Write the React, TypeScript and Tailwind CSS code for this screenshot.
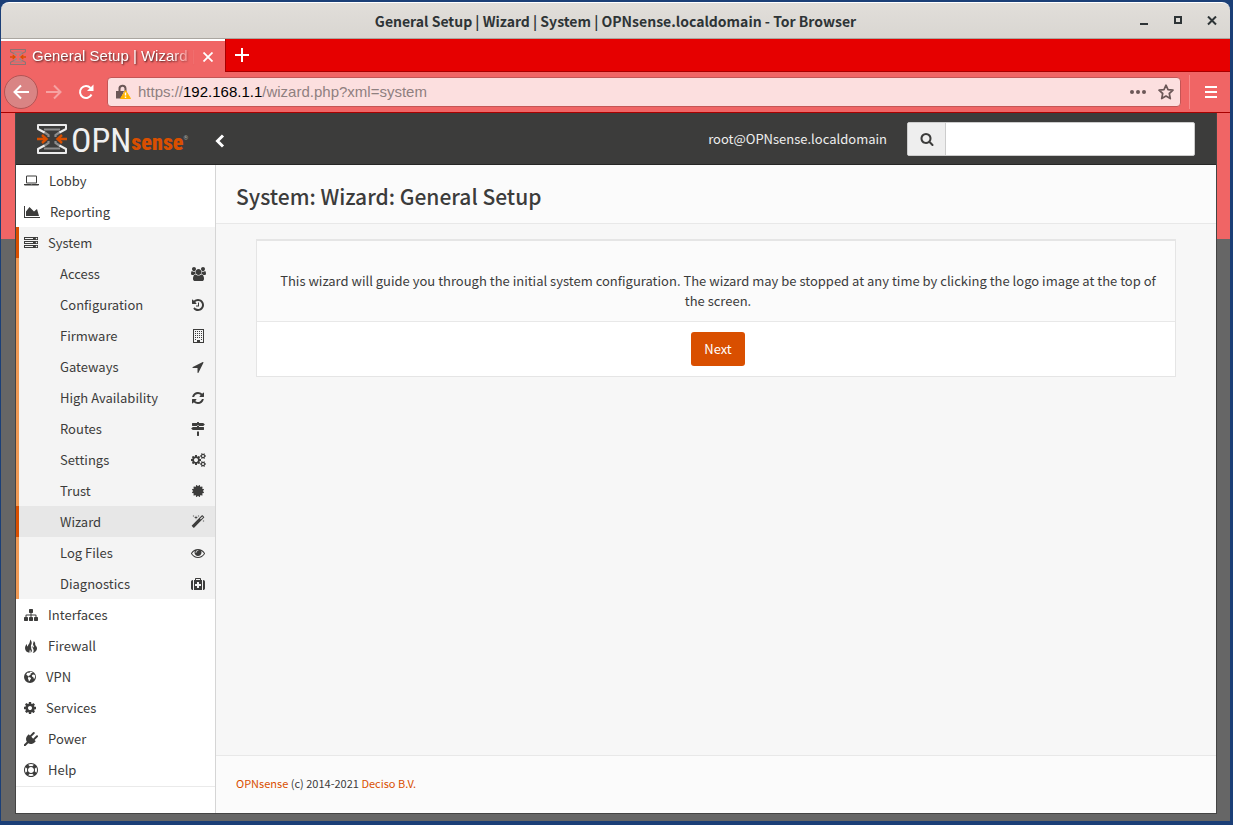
import React from "react";

type IconDef = { w: number; d: string };

const icons: Record<string, IconDef> = {
  laptop: { w: 1920, d: "M416 1216q-66 0-113-47t-47-113v-704q0-66 47-113t113-47h1088q66 0 113 47t47 113v704q0 66-47 113t-113 47h-1088zm-32-864v704q0 13 9.5 22.5t22.5 9.5h1088q13 0 22.5-9.5t9.5-22.5v-704q0-13-9.5-22.5t-22.5-9.5h-1088q-13 0-22.5 9.5t-9.5 22.5zm1376 928h160v96q0 40-47 68t-113 28h-1600q-66 0-113-28t-47-68v-96h1760zm-720 96q16 0 16-16t-16-16h-160q-16 0-16 16t16 16h160z" },
  chart: { w: 2048, d: "M2048 1536v128h-2048v-1536h128v1408h1920zm-384-1024l256 896h-1664v-576l448-576 576 576z" },
  server: { w: 1792, d: "M128 1408h1024v-128h-1024v128zm0-512h1024v-128h-1024v128zm1568 448q0-40-28-68t-68-28-68 28-28 68 28 68 68 28 68-28 28-68zm-1568-960h1024v-128h-1024v128zm1568 448q0-40-28-68t-68-28-68 28-28 68 28 68 68 28 68-28 28-68zm0-512q0-40-28-68t-68-28-68 28-28 68 28 68 68 28 68-28 28-68zm96 832v384h-1792v-384h1792zm0-512v384h-1792v-384h1792zm0-512v384h-1792v-384h1792z" },
  users: { w: 1920, d: "M593 896q-162 5-265 128h-134q-82 0-138-40.5t-56-118.5q0-353 124-353 6 0 43.5 21t97.5 42.5 119 21.5q67 0 133-23-5 37-5 66 0 139 81 256zm1071 637q0 120-73 189.5t-194 69.5h-874q-121 0-194-69.5t-73-189.5q0-53 3.5-103.5t14-109 26.5-108.5 43-97.5 62-81 85.5-53.5 111.5-20q10 0 43 21.5t73 48 107 48 135 21.5 135-21.5 107-48 73-48 43-21.5q61 0 111.5 20t85.5 53.5 62 81 43 97.5 26.5 108.5 14 109 3.5 103.5zm-1024-1277q0 106-75 181t-181 75-181-75-75-181 75-181 181-75 181 75 75 181zm704 384q0 159-112.5 271.5t-271.5 112.5-271.5-112.5-112.5-271.5 112.5-271.5 271.5-112.5 271.5 112.5 112.5 271.5zm576 225q0 78-56 118.5t-138 40.5h-134q-103-123-265-128 81-117 81-256 0-29-5-66 66 23 133 23 59 0 119-21.5t97.5-42.5 43.5-21q124 0 124 353zm-128-609q0 106-75 181t-181 75-181-75-75-181 75-181 181-75 181 75 75 181z" },
  history: { w: 1792, d: "M1664 896q0 156-61 298t-164 245-245 164-298 61q-172 0-327-72.5t-264-204.5q-7-10-6.5-22.5t8.5-20.5l137-138q10-9 25-9 16 2 23 12 73 95 179 147t225 52q104 0 198.5-40.5t163.5-109.5 109.5-163.5 40.5-198.5-40.5-198.5-109.5-163.5-163.5-109.5-198.5-40.5q-98 0-188 35.5t-160 101.5l137 138q31 30 14 69-17 40-59 40h-448q-26 0-45-19t-19-45v-448q0-42 40-59 39-17 69 14l130 129q107-101 244.5-156.5t284.5-55.5q156 0 298 61t245 164 164 245 61 298zm-640-288v448q0 14-9 23t-23 9h-320q-14 0-23-9t-9-23v-64q0-14 9-23t23-9h224v-352q0-14 9-23t23-9h64q14 0 23 9t9 23z" },
  building: { w: 1408, d: "M0 0h1408v1792h-1408zM128 128v1536h384v-256h384v256h384v-1536zM256 256h128v128h-128zM512 256h128v128h-128zM768 256h128v128h-128zM1024 256h128v128h-128zM256 512h128v128h-128zM512 512h128v128h-128zM768 512h128v128h-128zM1024 512h128v128h-128zM256 768h128v128h-128zM512 768h128v128h-128zM768 768h128v128h-128zM1024 768h128v128h-128zM256 1024h128v128h-128zM512 1024h128v128h-128zM768 1024h128v128h-128zM1024 1024h128v128h-128zM256 1280h128v128h-128zM1024 1280h128v128h-128z" },
  arrow: { w: 1792, d: "M1593 349l-640 1280q-17 35-57 35-5 0-15-2-22-5-35.5-22.5t-13.5-39.5v-576h-576q-22 0-39.5-13.5t-22.5-35.5 4-42 29-30l1280-640q13-7 29-7 27 0 45 19 15 14 18.5 34.5t-6.5 39.5z" },
  refresh: { w: 1792, d: "M1639 1056q0 5-1 7-64 268-268 434.5t-478 166.5q-146 0-282.5-55t-243.5-157l-129 129q-19 19-45 19t-45-19-19-45v-448q0-26 19-45t45-19h448q26 0 45 19t19 45-19 45l-137 137q71 66 161 102t187 36q134 0 250-65t186-179q11-17 53-117 8-23 30-23h192q13 0 22.5 9.5t9.5 22.5zm25-800v448q0 26-19 45t-45 19h-448q-26 0-45-19t-19-45 19-45l138-138q-148-137-349-137-134 0-250 65t-186 179q-11 17-53 117-8 23-30 23h-199q-13 0-22.5-9.5t-9.5-22.5v-7q65-268 270-434.5t480-166.5q146 0 284 55.5t245 156.5l130-129q19-19 45-19t45 19 19 45z" },
  signs: { w: 1792, d: "M1745 297q10 10 10 23t-10 23l-141 141q-28 28-68 28h-1344q-26 0-45-19t-19-45v-256q0-26 19-45t45-19h576v-64q0-26 19-45t45-19h128q26 0 45 19t19 45v64h512q40 0 68 28zm-977 919h256v512q0 26-19 45t-45 19h-128q-26 0-45-19t-19-45v-512zm832-576q26 0 45 19t19 45v256q0 26-19 45t-45 19h-1344q-40 0-68-28l-141-141q-10-10-10-23t10-23l141-141q28-28 68-28h512v-192h256v192h576z" },
  cogs: { w: 1920, d: "M896 896q0-106-75-181t-181-75-181 75-75 181 75 181 181 75 181-75 75-181zm768 512q0-52-38-90t-90-38-90 38-38 90q0 53 37.5 90.5t90.5 37.5 90.5-37.5 37.5-90.5zm0-1024q0-52-38-90t-90-38-90 38-38 90q0 53 37.5 90.5t90.5 37.5 90.5-37.5 37.5-90.5zm-384 421v185q0 10-7 19.5t-16 10.5l-155 24q-11 35-32 76 34 48 90 115 7 11 7 20 0 12-7 19-23 30-82.5 89.5t-78.5 59.5q-11 0-21-7l-115-90q-37 19-77 31-11 108-23 155-7 24-30 24h-186q-11 0-20-7.5t-10-17.5l-23-153q-34-10-75-31l-118 89q-7 7-20 7-11 0-21-8-144-133-144-160 0-9 7-19 10-14 41-53t47-61q-23-44-35-82l-152-24q-10-1-17-9.5t-7-19.5v-185q0-10 7-19.5t16-10.5l155-24q11-35 32-76-34-48-90-115-7-11-7-20 0-12 7-20 22-30 82-89t79-59q11 0 21 7l115 90q34-18 77-32 11-108 23-154 7-24 30-24h186q11 0 20 7.5t10 17.5l23 153q34 10 75 31l118-89q8-7 20-7 11 0 21 8 144 133 144 160 0 8-7 19-12 16-42 54t-45 60q23 48 34 82l152 23q10 2 17 10.5t7 19.5zm640 533v140q0 16-149 31-12 27-30 52 51 113 51 138 0 4-4 7-122 71-124 71-8 0-46-47t-52-68q-20 2-30 2t-30-2q-14 21-52 68t-46 47q-2 0-124-71-4-3-4-7 0-25 51-138-18-25-30-52-149-15-149-31v-140q0-16 149-31 13-29 30-52-51-113-51-138 0-4 4-7 4-2 35-20t59-34 30-16q8 0 46 46.5t52 67.5q20-2 30-2t30 2q51-71 92-112l6-2q4 0 124 70 4 3 4 7 0 25-51 138 17 23 30 52 149 15 149 31zm0-1024v140q0 16-149 31-12 27-30 52 51 113 51 138 0 4-4 7-122 71-124 71-8 0-46-47t-52-68q-20 2-30 2t-30-2q-14 21-52 68t-46 47q-2 0-124-71-4-3-4-7 0-25 51-138-18-25-30-52-149-15-149-31v-140q0-16 149-31 13-29 30-52-51-113-51-138 0-4 4-7 4-2 35-20t59-34 30-16q8 0 46 46.5t52 67.5q20-2 30-2t30 2q51-71 92-112l6-2q4 0 124 70 4 3 4 7 0 25-51 138 17 23 30 52 149 15 149 31z" },
  certificate: { w: 1536, d: "M1376 896l138 135q30 28 20 70-12 41-52 51l-188 48 53 186q12 41-19 70-29 31-70 19l-186-53-48 188q-10 40-51 52-12 2-19 2-31 0-51-22l-135-138-135 138q-28 30-70 20-41-11-51-52l-48-188-186 53q-41 12-70-19-31-29-19-70l53-186-188-48q-40-10-52-51-10-42 20-70l138-135-138-135q-30-28-20-70 12-41 52-51l188-48-53-186q-12-41 19-70 29-31 70-19l186 53 48-188q10-41 51-51 41-12 70 19l135 139 135-139q29-30 70-19 41 10 51 51l48 188 186-53q41-12 70 19 31 29 19 70l-53 186 188 48q40 10 52 51 10 42-20 70z" },
  magic: { w: 1792, d: "M1254 581l293-293-107-107-293 293zm447-293q0 27-18 45l-1286 1286q-18 18-45 18t-45-18l-198-198q-18-18-18-45t18-45l1286-1286q18-18 45-18t45 18l198 198q18 18 18 45zm-1351-190l98 30-98 30-30 98-30-98-98-30 98-30 30-98zm350 162l196 60-196 60-60 196-60-196-196-60 196-60 60-196zm930 478l98 30-98 30-30 98-30-98-98-30 98-30 30-98zm-640-640l98 30-98 30-30 98-30-98-98-30 98-30 30-98z" },
  eye: { w: 1792, d: "M1664 960q-152-236-381-353 61 104 61 225 0 185-131.5 316.5t-316.5 131.5-316.5-131.5-131.5-316.5q0-121 61-225-229 117-381 353 133 205 333.5 326.5t434.5 121.5 434.5-121.5 333.5-326.5zm-720-384q0-20-14-34t-34-14q-125 0-214.5 89.5t-89.5 214.5q0 20 14 34t34 14 34-14 14-34q0-86 61-147t147-61q20 0 34-14t14-34zm848 384q0 34-20 69-140 230-376.5 368.5t-499.5 138.5-499.5-139-376.5-368q-20-35-20-69t20-69q140-229 376.5-368t499.5-139 499.5 139 376.5 368q20 35 20 69z" },
  medkit: { w: 1792, d: "M1280 1120v-192q0-14-9-23t-23-9h-224v-224q0-14-9-23t-23-9h-192q-14 0-23 9t-9 23v224h-224q-14 0-23 9t-9 23v192q0 14 9 23t23 9h224v224q0 14 9 23t23 9h192q14 0 23-9t9-23v-224h224q14 0 23-9t9-23zm-640-736h512v-128h-512v128zm-384 0v1280h-32q-92 0-158-66t-66-158v-832q0-92 66-158t158-66h32zm1152 0v1280h-1024v-1280h128v-160q0-40 28-68t68-28h576q40 0 68 28t28 68v160h128zm384 224v832q0 92-66 158t-158 66h-32v-1280h32q92 0 158 66t66 158z" },
  sitemap: { w: 1792, d: "M1792 1248v320q0 40-28 68t-68 28h-320q-40 0-68-28t-28-68v-320q0-40 28-68t68-28h96v-192h-512v192h96q40 0 68 28t28 68v320q0 40-28 68t-68 28h-320q-40 0-68-28t-28-68v-320q0-40 28-68t68-28h96v-192h-512v192h96q40 0 68 28t28 68v320q0 40-28 68t-68 28h-320q-40 0-68-28t-28-68v-320q0-40 28-68t68-28h96v-192q0-52 38-90t90-38h512v-192h-96q-40 0-68-28t-28-68v-320q0-40 28-68t68-28h320q40 0 68 28t28 68v320q0 40-28 68t-68 28h-96v192h512q52 0 90 38t38 90v192h96q40 0 68 28t28 68z" },
  fire: { w: 1792, d: "M800 60C1020 340 1030 560 930 740C870 850 870 940 930 1000C880 1180 960 1330 1010 1440C1020 1580 960 1700 840 1770C880 1560 850 1450 760 1330C720 1470 690 1600 700 1770C400 1730 140 1500 130 1180C120 940 240 780 380 640C370 820 390 930 450 960C520 740 680 600 720 440C750 320 790 220 800 60zM1250 260C1460 440 1430 620 1440 720C1470 850 1660 920 1670 1180C1670 1500 1430 1720 1110 1790C1230 1640 1270 1480 1210 1330C1150 1180 1040 1080 1100 860C1130 980 1170 1060 1260 1100C1320 940 1200 860 1160 720C1120 560 1240 450 1250 260z" },
  globe: { w: 1536, d: "M768 128a768 768 0 1 0 0 1536a768 768 0 1 0 0-1536zM700 250C850 210 1010 240 1120 310L1010 400L900 370L830 450L920 520L800 600L720 700L600 740L640 830L520 800L440 700L330 640L290 560L400 380L520 320L640 380L760 330zM1080 620L1230 560L1390 640L1420 900L1340 1120L1230 1080L1200 920L1060 850L1000 730zM560 910L740 930L900 1030L880 1160L780 1250L720 1400L620 1450L590 1250L500 1120z" },
  cog: { w: 1536, d: "M1024 896q0-106-75-181t-181-75-181 75-75 181 75 181 181 75 181-75 75-181zm512-109v222q0 12-8 23t-20 13l-185 28q-19 54-39 91 35 50 107 138 10 12 10 25t-9 23q-27 37-99 108t-94 71q-12 0-26-9l-138-108q-44 23-91 38-16 136-29 186-7 28-36 28h-222q-14 0-24.5-8.5t-11.5-21.5l-28-184q-49-16-90-37l-141 107q-10 9-25 9-14 0-25-11-126-114-165-168-7-10-7-23 0-12 8-23 15-21 51-66.5t54-70.5q-27-50-41-99l-183-27q-13-2-21-12.5t-8-23.5v-222q0-12 8-23t19-13l186-28q14-46 39-92-40-57-107-138-10-12-10-24 0-10 9-23 26-36 98.5-107.5t94.5-71.5q13 0 26 10l138 107q44-23 91-38 16-136 29-186 7-28 36-28h222q14 0 24.5 8.5t11.5 21.5l28 184q49 16 90 37l142-107q9-9 24-9 13 0 25 10 129 119 165 170 7 8 7 22 0 12-8 23-15 21-51 66.5t-54 70.5q26 50 41 98l183 28q13 2 21 12.5t8 23.5z" },
  plug: { w: 1792, d: "M1755 453q37 38 37 90.5t-37 90.5l-401 400 150 150-160 160q-163 163-389.5 186.5t-411.5-100.5l-362 362h-181v-181l362-362q-124-185-100.5-411.5t186.5-389.5l160-160 150 150 400-401q38-37 91-37t90 37 37 90.5-37 90.5l-400 401 234 234 401-400q38-37 91-37t90 37z" },
  ring: { w: 1792, d: "M896 0q182 0 348 71t286 191 191 286 71 348-71 348-191 286-286 191-348 71-348-71-286-191-191-286-71-348 71-348 191-286 286-191 348-71zm0 128q-190 0-361 90l194 194q82-28 167-28t167 28l194-194q-171-90-361-90zm-678 1129l194-194q-28-82-28-167t28-167l-194-194q-90 171-90 361t90 361zm678 407q190 0 361-90l-194-194q-82 28-167 28t-167-28l-194 194q171 90 361 90zm0-384q159 0 271.5-112.5t112.5-271.5-112.5-271.5-271.5-112.5-271.5 112.5-112.5 271.5 112.5 271.5 271.5 112.5zm484-217l194 194q90-171 90-361t-90-361l-194 194q28 82 28 167t-28 167z" },
  search: { w: 1792, d: "M1216 832q0-185-131.5-316.5t-316.5-131.5-316.5 131.5-131.5 316.5 131.5 316.5 316.5 131.5 316.5-131.5 131.5-316.5zm512 832q0 52-38 90t-90 38q-54 0-90-38l-343-342q-179 124-399 124-143 0-273.5-55.5t-225-150-150-225-55.5-273.5 55.5-273.5 150-225 225-150 273.5-55.5 273.5 55.5 225 150 150 225 55.5 273.5q0 220-124 399l343 343q37 37 37 90z" },
};

function Icon({ name }: { name: string }) {
  const { w, d } = icons[name];
  return (
    <svg
      viewBox={`0 0 ${w} 1792`}
      width={(w * 14) / 1792}
      height={14}
      className="shrink-0"
      fill="currentColor"
      fillRule="evenodd"
      aria-hidden="true"
    >
      <path d={d} />
    </svg>
  );
}

/* Two facing brackets squeezed by orange arrows */
function Emblem({ className, bright }: { className: string; bright?: boolean }) {
  const edge = bright ? "#ececec" : "#8f7474";
  return (
    <svg viewBox="0 0 30 30" className={className} fill="none" aria-hidden="true">
      <path d="M7 5.500H23M7 24.500H23" stroke="#8c8c8c" strokeWidth="2" />
      <path d="M7 8 11.500 11V13M23 8 18.500 11V13M7 22 11.500 19V17M23 22 18.500 19V17" stroke="#8c8c8c" strokeWidth="2.200" />
      <path d="M7.500 8.500 1 5V1H29V5L22.500 8.500M7.500 21.500 1 25V29H29V25L22.500 21.500" stroke={edge} strokeWidth="2" strokeLinejoin="round" />
      <path d="M0 15H8M5 11 9.500 15 5 19M30 15H22M25 11 20.500 15 25 19" stroke="#d94f00" strokeWidth="2.400" />
    </svg>
  );
}

const subItems = [
  ["Access", "users"],
  ["Configuration", "history"],
  ["Firmware", "building"],
  ["Gateways", "arrow"],
  ["High Availability", "refresh"],
  ["Routes", "signs"],
  ["Settings", "cogs"],
  ["Trust", "certificate"],
  ["Wizard", "magic"],
  ["Log Files", "eye"],
  ["Diagnostics", "medkit"],
];

function MainItem({ label, icon, open }: { label: string; icon: string; open?: boolean }) {
  return (
    <a
      href="#"
      className={
        "flex h-[31px] items-center gap-2.5 border-l-3 pl-[5px] " +
        (open ? "border-[#d94f00] bg-[#f4f4f4]" : "border-transparent")
      }
    >
      <Icon name={icon} />
      {label}
    </a>
  );
}

function TitleBar() {
  return (
    <div className="grid h-[37px] grid-cols-[1fr_auto_1fr] items-center rounded-t-lg border-t border-b border-t-white border-b-[#aaa6a0] bg-linear-to-b from-[#e1deda] to-[#d9d6d1] font-['Noto_Sans_CJK_SC',sans-serif] text-[#2e3436]">
      <span />
      <h1 className="text-sm font-bold">General Setup | Wizard | System | OPNsense.localdomain - Tor Browser</h1>
      <div className="flex justify-end gap-4 pr-[9px]">
        <button aria-label="Minimize" className="flex size-[18px] items-center justify-center">
          <svg width="10" height="10" viewBox="0 0 10 10"><path d="M1 8H9" stroke="currentColor" strokeWidth="2" /></svg>
        </button>
        <button aria-label="Maximize" className="flex size-[18px] items-center justify-center">
          <svg width="10" height="10" viewBox="0 0 10 10"><path d="M2 1H8V7H2Z" stroke="currentColor" strokeWidth="2" fill="none" /></svg>
        </button>
        <button aria-label="Close" className="flex size-[18px] items-center justify-center">
          <svg width="10" height="10" viewBox="0 0 10 10"><path d="M1 .5 9 8.500M9 .5 1 8.500" stroke="currentColor" strokeWidth="2" /></svg>
        </button>
      </div>
    </div>
  );
}

function TabStrip() {
  return (
    <div className="flex h-[33px] bg-[#e60000]">
      <div className="flex w-56 items-center border-t-2 border-white bg-[#f06565] pr-2 pl-[9px] text-white">
        <Emblem className="size-4 shrink-0" />
        <span className="ml-1.5 min-w-0 flex-1 overflow-hidden whitespace-nowrap text-[15px] [mask-image:linear-gradient(to_right,black_85%,transparent)] [text-shadow:1px_1px_2px_#000000b0]">
          General Setup | Wizard | System
        </span>
        <button aria-label="Close tab" className="ml-1 flex size-[18px] items-center justify-center">
          <svg width="10" height="10" viewBox="0 0 10 10"><path d="M.5 .5 9.500 9.500M9.500 .5 .5 9.500" stroke="currentColor" strokeWidth="1.8" /></svg>
        </button>
      </div>
      <div className="flex flex-1 items-center border-b border-l border-[#a80000] pl-2 text-white">
        <button aria-label="New tab">
          <svg width="16" height="16" viewBox="0 0 16 16"><path d="M8 1V15M1 8H15" stroke="currentColor" strokeWidth="2" /></svg>
        </button>
      </div>
    </div>
  );
}

function Toolbar() {
  return (
    <div className="flex h-[41px] items-center border-b border-[#a80000] bg-[#f06565] text-white">
      <button aria-label="Back" className="ml-[3px] flex size-[34px] shrink-0 items-center justify-center rounded-full border border-[#b35454] bg-[#d98484]">
        <svg width="16" height="16" viewBox="0 0 16 16" fill="none"><path d="M16 8H1.500M8 1.500 1.500 8 8 14.500" stroke="currentColor" strokeWidth="2" /></svg>
      </button>
      <button aria-label="Forward" className="ml-2 shrink-0 text-white/40">
        <svg width="16" height="16" viewBox="0 0 16 16" fill="none"><path d="M0 8H14.500M8 1.500 14.500 8 8 14.500" stroke="currentColor" strokeWidth="2" /></svg>
      </button>
      <button aria-label="Reload" className="mr-[13px] ml-4 shrink-0">
        <svg width="16" height="16" viewBox="0 0 16 16" fill="none">
          <path d="M13.500 10.500A6 6 0 1 1 12.500 4" stroke="currentColor" strokeWidth="2" />
          <path d="M15.500 .5V7H9Z" fill="currentColor" />
        </svg>
      </button>
      <div className="flex h-[30px] min-w-0 flex-1 items-center rounded-sm border border-[#c45555] bg-[#fcdfdf] pr-1.5 pl-2 text-[15px] text-[#555]">
        <svg width="15" height="16" viewBox="0 0 15 16" className="shrink-0" fill="none" aria-hidden="true">
          <path d="M3.500 7V5A3 3 0 0 1 9.500 4.500V8" stroke="#6b5757" strokeWidth="2" />
          <path d="M0 7H8L5 14.500H0Z" fill="#6b5757" />
          <path d="M9.500 6.500 14.500 14.500H4.500Z" fill="#ffb400" stroke="#ffb400" strokeLinejoin="round" />
          <path d="M9.500 8.500V11.500M9.500 12.500V14" stroke="#fff" strokeWidth="1.400" />
        </svg>
        <div className="relative ml-[7px] h-5 flex-1">
          <input
            aria-label="Address"
            defaultValue="https://192.168.1.1/wizard.php?xml=system"
            className="block h-5 w-full bg-transparent text-transparent caret-black outline-none"
          />
          <span aria-hidden="true" className="pointer-events-none absolute inset-0 leading-5 text-[#8f8080]">
            https://<span className="text-black">192.168.1.1</span>/wizard.php?xml=system
          </span>
        </div>
        <button aria-label="Page actions">
          <svg width="16" height="16" viewBox="0 0 16 16" fill="#6b5757"><circle cx="2" cy="8" r="2" /><circle cx="8" cy="8" r="2" /><circle cx="14" cy="8" r="2" /></svg>
        </button>
        <button aria-label="Bookmark" className="ml-3">
          <svg width="16" height="16" viewBox="0 0 16 16" fill="none"><path d="M8 1.200 10 5.600 15 6.200 11.300 9.500 12.300 14.600 8 12.100 3.700 14.600 4.700 9.500 1 6.200 6 5.600Z" stroke="#6b5757" strokeWidth="1.700" strokeLinejoin="round" /></svg>
        </button>
      </div>
      <div className="ml-2 h-[34px] w-px bg-[#f68b8b]" />
      <button aria-label="Menu" className="mr-[13px] ml-[15px] shrink-0">
        <svg width="12" height="12" viewBox="0 0 12 12"><path d="M0 1H12M0 6H12M0 11H12" stroke="currentColor" strokeWidth="2" /></svg>
      </button>
    </div>
  );
}

function PageHeader() {
  return (
    <header className="flex h-[52px] items-center border-b border-[#262625] bg-[#3c3c3b] text-white">
      <a href="#" aria-label="OPNsense" className="ml-[21px] flex shrink-0 items-end font-['Roboto_Condensed','Open_Sans_Condensed',sans-serif]">
        <Emblem className="size-[30px]" bright />
        <span className="ml-1 text-[34px] leading-7 font-normal text-[#f0f0f0]">OPN</span>
        <span className="text-[22px] leading-[22px] font-black text-[#d94f00]">sense</span>
        <span className="mb-3 text-[6px] text-[#aaa]">®</span>
      </a>
      <button aria-label="Collapse menu" className="mt-1 ml-[26px] shrink-0">
        <svg width="12" height="14" viewBox="0 0 12 14" fill="none"><path d="M9 1.500 3.500 7 9 12.500" stroke="currentColor" strokeWidth="3" /></svg>
      </button>
      <span className="ml-auto text-[13px] text-[#eee]">root@OPNsense.localdomain</span>
      <form className="mr-[21px] ml-5 flex h-[34px] w-72 rounded-xs border border-[#ccc] bg-white text-[#3c3c3b]">
        <button type="button" aria-label="Search" className="flex w-[38px] items-center justify-center border-r border-[#ccc] bg-[#eee]">
          <Icon name="search" />
        </button>
        <input aria-label="Search terms" className="min-w-0 flex-1 px-2 text-[13px] outline-none" />
      </form>
    </header>
  );
}

function Sidebar() {
  return (
    <nav className="w-[200px] shrink-0 border-r border-[#d5d5d5] bg-white text-[13px]">
      <div className="border-b border-[#eaeaea] pb-px">
        <MainItem label="Lobby" icon="laptop" />
        <MainItem label="Reporting" icon="chart" />
        <MainItem label="System" icon="server" open />
        {subItems.map(([label, icon]) => (
          <a
            key={label}
            href="#"
            className={
              "flex h-[31px] items-center justify-between border-l-3 pr-2 pl-[41px] " +
              (label === "Wizard" ? "border-[#d94f00] bg-[#e7e7e7]" : "border-[#f09a55] bg-[#f4f4f4]")
            }
          >
            {label}
            <span className="flex w-[18px] justify-center">
              <Icon name={icon} />
            </span>
          </a>
        ))}
        <MainItem label="Interfaces" icon="sitemap" />
        <MainItem label="Firewall" icon="fire" />
        <MainItem label="VPN" icon="globe" />
        <MainItem label="Services" icon="cog" />
        <MainItem label="Power" icon="plug" />
        <MainItem label="Help" icon="ring" />
      </div>
    </nav>
  );
}

export default function App() {
  return (
    <div className="flex min-h-screen flex-col bg-[#1b3f77] pt-0.5 pr-[3px] pb-1 pl-px font-['Liberation_Sans',sans-serif]">
      <TitleBar />
      <TabStrip />
      <Toolbar />
      <div className="flex flex-1 flex-col bg-[#666] bg-[linear-gradient(#f06565,#f06565)] bg-size-[100%_126px] bg-no-repeat pr-[13px] pb-[7px] pl-3.5">
        <div className="flex flex-1 flex-col border-x border-b border-[#444] font-['Noto_Sans_CJK_SC',sans-serif] text-[#3c3c3b]">
          <PageHeader />
          <div className="flex flex-1">
            <Sidebar />
            <div className="flex min-w-0 flex-1 flex-col bg-[#f7f7f7]">
              <div className="flex h-[59px] items-center border-b border-[#e8e8e8] bg-[#fbfbfb] px-5 pt-1.5">
                <h2 className="text-[21px] font-medium">System: Wizard: General Setup</h2>
              </div>
              <main className="flex-1 px-10 pt-[15px]">
                <div className="border border-t-2 border-[#e5e5e5] bg-white text-[13px]">
                  <p className="border-b border-[#e8e8e8] bg-[#fbfbfb] pt-[30px] pr-3.5 pb-2.5 pl-[18px] text-center leading-5">
                    This wizard will guide you through the initial system configuration. The wizard may be stopped at any time by clicking the logo image at the top of the screen.
                  </p>
                  <div className="flex justify-center py-2.5 pl-1">
                    <button className="h-[34px] rounded-[3px] bg-[#d94f00] px-[13px] text-white">Next</button>
                  </div>
                </div>
              </main>
              <footer className="flex h-[58px] items-center border-t border-[#e8e8e8] bg-[#fbfbfb] px-5 pb-0.5 text-[11px]">
                <p>
                  <a href="#" className="text-[#d94f00]">OPNsense</a> (c) 2014-2021 <a href="#" className="text-[#d94f00]">Deciso B.V.</a>
                </p>
              </footer>
            </div>
          </div>
        </div>
      </div>
    </div>
  );
}
